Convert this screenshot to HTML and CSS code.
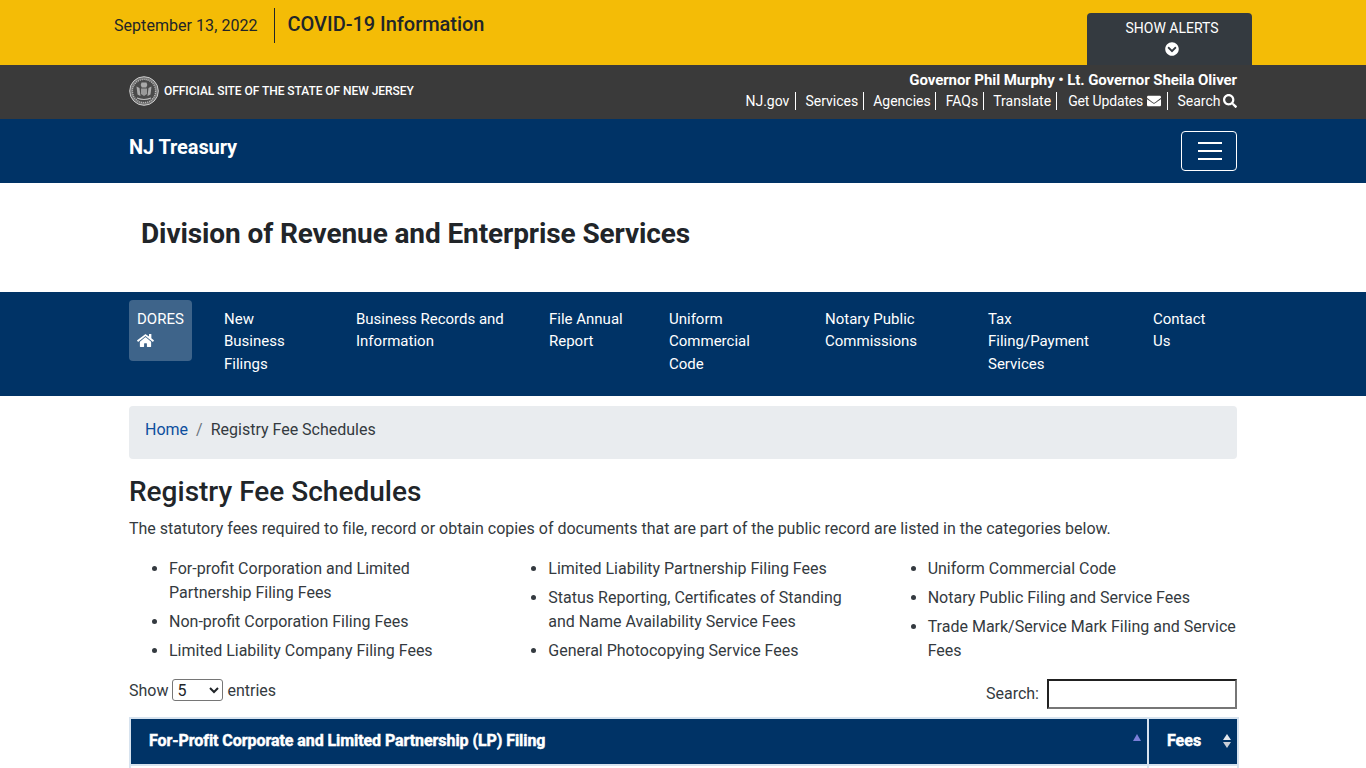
FILE: index.html
```html
<!DOCTYPE html>
<html lang="en">
<head>
<meta charset="utf-8">
<title>Registry Fee Schedules</title>
<link rel="stylesheet" href="styles.css">
</head>
<body>
<div class="alertbar">
  <div class="alertbar-in">
    <span class="date">September 13, 2022</span>
    <span class="covid">COVID-19 Information</span>
    <button class="alerts"><span>SHOW ALERTS</span>
      <svg class="chev" viewBox="0 0 512 512" width="14" height="14"><path fill="#fff" d="M504 256c0 137-111 248-248 248S8 393 8 256 119 8 256 8s248 111 248 248zM273 369l136-136c9-9 9-25 0-34l-17-17c-9-9-25-9-34 0L256 284 154 182c-9-9-25-9-34 0l-17 17c-9 9-9 25 0 34l136 136c9 10 25 10 34 0z"/></svg>
    </button>
  </div>
</div>
<div class="statebar">
  <div class="wrap statebar-in">
    <div class="official">
      <svg class="seal" viewBox="0 0 30 30" width="30" height="30">
        <circle cx="15" cy="15" r="14.3" fill="#777" stroke="#ccc" stroke-width="1"/>
        <circle cx="15" cy="15" r="11.6" fill="#4a4a4a" stroke="#bbb" stroke-width="1.4" stroke-dasharray="1 1"/>
        <path fill="#aaa" d="M12.5 6.5h5l.8 2.5-1 2.5h-4.6l-1-2.5zM7.5 10.5l3 1.5 1 8-3-1.5zM22.5 10.5l-3 1.5-1 8 3-1.5z"/>
        <path fill="#999" d="M12 12.5h6v5.5l-3 2-3-2z"/>
        <path stroke="#bbb" stroke-width="1.2" fill="none" d="M8 22q7 3 14 0"/>
      </svg>
      <span>OFFICIAL SITE OF THE STATE OF NEW JERSEY</span>
    </div>
    <div class="gov">
      <div class="gov-name">Governor Phil Murphy • Lt. Governor Sheila Oliver</div>
      <ul class="gov-links">
        <li>NJ.gov</li>
        <li>Services</li>
        <li>Agencies</li>
        <li>FAQs</li>
        <li>Translate</li>
        <li>Get Updates <svg viewBox="0 0 512 512" width="14" height="14"><path fill="#fff" d="M502 191c4-3 10 0 10 5v205c0 26-22 48-48 48H48c-26 0-48-22-48-48V196c0-5 6-8 10-5 22 17 52 39 154 113 21 15 57 48 92 48 35 0 72-33 92-48 102-74 132-96 154-113zM256 320c23 0 57-29 73-41 133-97 143-105 174-129 6-5 9-12 9-19v-19c0-26-22-48-48-48H48C22 64 0 86 0 112v19c0 7 3 14 9 19 31 24 41 32 174 129 16 12 50 41 73 41z"/></svg></li>
        <li>Search <svg class="tight" viewBox="0 0 512 512" width="14" height="14"><path fill="#fff" d="M505 443L405 343c-4-4-10-7-17-7h-16c28-35 44-80 44-128C416 93 323 0 208 0S0 93 0 208s93 208 208 208c48 0 93-16 128-44v16c0 7 3 13 7 17l100 100c9 9 24 9 34 0l28-28c9-10 9-25 0-34zM208 336c-71 0-128-57-128-128S137 80 208 80s128 57 128 128-57 128-128 128z"/></svg></li>
      </ul>
    </div>
  </div>
</div>
<div class="brandbar">
  <div class="wrap brandbar-in">
    <span class="brand">NJ Treasury</span>
    <button class="toggler"><span></span><span></span><span></span></button>
  </div>
</div>
<div class="division">
  <div class="wrap"><h2>Division of Revenue and Enterprise Services</h2></div>
</div>
<nav class="mainnav">
  <div class="wrap navgrid">
    <div class="navitem active">DORES<svg viewBox="0 0 576 512" width="17" height="15"><path fill="#fff" d="M280 148L96 300v164c0 9 7 16 16 16l112 0c9 0 16-7 16-16v-96c0-9 7-16 16-16h64c9 0 16 7 16 16v96c0 9 7 16 16 16l112 0c9 0 16-7 16-16V300L296 148c-5-4-11-4-16 0zM572 251l-84-69V44c0-7-5-12-12-12h-56c-7 0-12 5-12 12v72L318 58c-18-15-43-15-61 0L4 251c-5 4-6 12-2 17l26 31c4 5 12 6 17 2l235-193c4-4 11-4 15 0l235 193c5 4 13 3 17-2l26-31c4-5 3-13-1-17z"/></svg></div>
    <div class="navitem">New<br>Business<br>Filings</div>
    <div class="navitem">Business Records and Information</div>
    <div class="navitem">File Annual Report</div>
    <div class="navitem">Uniform<br>Commercial<br>Code</div>
    <div class="navitem">Notary Public Commissions</div>
    <div class="navitem">Tax<br>Filing/Payment<br>Services</div>
    <div class="navitem">Contact<br>Us</div>
  </div>
</nav>
<main class="wrap content">
  <div class="crumb"><a href="#">Home</a><span class="sep">/</span>Registry Fee Schedules</div>
  <h1>Registry Fee Schedules</h1>
  <p class="intro">The statutory fees required to file, record or obtain copies of documents that are part of the public record are listed in the categories below.</p>
  <div class="cols">
    <ul>
      <li>For-profit Corporation and Limited Partnership Filing Fees</li>
      <li>Non-profit Corporation Filing Fees</li>
      <li>Limited Liability Company Filing Fees</li>
    </ul>
    <ul>
      <li>Limited Liability Partnership Filing Fees</li>
      <li>Status Reporting, Certificates of Standing and Name Availability Service Fees</li>
      <li>General Photocopying Service Fees</li>
    </ul>
    <ul>
      <li>Uniform Commercial Code</li>
      <li>Notary Public Filing and Service Fees</li>
      <li>Trade Mark/Service Mark Filing and Service Fees</li>
    </ul>
  </div>
  <div class="controls">
    <label class="show">Show <select><option>5</option><option>10</option></select> entries</label>
    <label class="search"><span>Search:</span><input type="text"></label>
  </div>
  <table class="fees">
    <thead>
      <tr>
        <th class="c1"><span class="c1-text">For-Profit Corporate and Limited Partnership (LP) Filing</span><span class="sort up"></span></th>
        <th class="c2"><span>Fees</span><span class="sort both"></span></th>
      </tr>
    </thead>
    <tbody>
      <tr><td class="c1"></td><td class="c2"></td></tr>
    </tbody>
  </table>
</main>
</body>
</html>
```
FILE: styles.css
```css
* { box-sizing: border-box; }
html, body { margin: 0; padding: 0; height: 768px; overflow: hidden; }
body { font-family: Roboto, sans-serif; font-size: 16px; line-height: 1.5; color: #212529; background: #fff; }
.wrap { width: 1108px; margin: 0 auto; }

.alertbar { background: #f4bc06; height: 65px; }
.alertbar-in { width: 1138px; margin: 0 auto; display: flex; align-items: flex-start; }
.date { margin-top: 14px; padding-right: 16px; line-height: 24px; letter-spacing: 0.05px; }
.covid { margin-top: 8px; padding-left: 13px; border-left: 1px solid #212529; font-size: 20px; font-weight: 500; line-height: 32px; height: 35px; letter-spacing: -0.03px; }
.alerts { margin-left: auto; margin-top: 13px; width: 165px; height: 52px; background: #343a40; color: #fff; border: 0; border-radius: 4px 4px 0 0; font: 400 14px/20px Roboto, sans-serif; padding: 5px 0 0 5px; display: flex; flex-direction: column; align-items: center; justify-content: flex-start; }
.chev { display: block; margin-top: 4px; }

.statebar { background: #3a3a3a; height: 54px; color: #fff; }
.statebar-in { display: flex; justify-content: space-between; }
.official { display: flex; align-items: center; gap: 5px; font-size: 12px; font-weight: 500; height: 52px; letter-spacing: -0.05px; }
.gov { text-align: right; padding-top: 4px; }
.gov-name { font-size: 15px; font-weight: 700; line-height: 22px; letter-spacing: -0.08px; }
.gov-links { list-style: none; margin: 1px 0 0; padding: 0; display: flex; justify-content: flex-end; font-size: 14px; line-height: 18px; }
.gov-links li { padding: 0 4.5px 0 9.5px; border-right: 1px solid #fff; }
.gov-links li:first-child { padding-left: 0; padding-right: 5.5px; }
.gov-links li:nth-child(6) { padding-left: 11.5px; padding-right: 6.5px; letter-spacing: -0.15px; }
.gov-links li:last-child { padding-right: 0; border-right: 0; }
.gov-links svg { vertical-align: -2px; }
.gov-links svg.tight { margin-left: -1px; }

.brandbar { background: #003366; height: 64px; }
.brandbar-in { display: flex; justify-content: space-between; align-items: flex-start; }
.brand { color: #fff; font-size: 20px; font-weight: 700; line-height: 30px; margin-top: 13px; letter-spacing: -0.1px; }
.toggler { width: 56px; height: 40px; margin-top: 12px; background: transparent; border: 1px solid #fff; border-radius: 4px; padding: 10px 16px 0 16px; display: flex; flex-direction: column; gap: 6px; }
.toggler span { display: block; width: 24px; height: 2px; background: #fff; }

.division { height: 109px; background: #fff; }
.division h2 { margin: 0; padding: 31px 0 0 12px; font-size: 28px; font-weight: 700; line-height: 40px; letter-spacing: -0.11px; }

.mainnav { background: #003366; height: 104px; padding-top: 8px; color: #fff; }
.navgrid { display: grid; grid-template-columns: 63px 156px 193px 120px 156px 163px 165px 92px; font-size: 15px; line-height: 22.5px; }
.navitem { padding: 7.5px 8px 8px; }
.navitem:nth-child(2) { margin-left: 24px; }
.navitem.active { background: #3e648a; border-radius: 4px; height: 61px; }
.navitem.active svg { display: block; margin-top: 3px; }

.content { padding-top: 10px; }
.crumb { background: #e9ecef; border-radius: 4px; height: 53px; padding: 12px 16px 0; color: #343a40; }
.crumb a { color: #0d4f9e; text-decoration: none; }
.crumb .sep { color: #6c757d; padding: 0 8px; }
h1 { margin: 16px 0 0; font-size: 28px; font-weight: 500; line-height: 34px; }
.intro { margin: 8px 0 0; letter-spacing: -0.007px; color: #343a40; }
.cols { display: grid; grid-template-columns: repeat(3, 1fr); column-gap: 30px; margin-top: 16px; color: #343a40; }
.cols ul { margin: 0; padding-left: 40px; }
.cols li { margin-bottom: 5px; }
.controls { display: flex; justify-content: space-between; align-items: flex-start; margin-top: 11px; color: #343a40; }
.show select { font: 16px Roboto, sans-serif; width: 51px; height: 22px; padding: 0; background: #fff; border: 1px solid #767676; border-radius: 3px; color: #212529; }
.search { display: flex; align-items: flex-start; gap: 8px; }
.search span { margin-top: 3px; }
.search input { width: 190px; height: 30px; border: 2px solid; border-color: #212121 #767676 #767676 #212121; padding: 1px 2px; background: #fff; }
.fees { width: 1110px; margin-top: 8px; border-collapse: separate; border-spacing: 0; border: 2px solid #d7e3ef; border-bottom: 0; }
.fees th { background: #003366; color: #fff; height: 45px; text-align: left; position: relative; font-size: 16px; font-weight: 700; padding: 0 18px 2px; -webkit-text-stroke: 0.45px #fff; }
.fees td { border-top: 2px solid #d7e3ef; height: 4px; padding: 0; }
.c1-text { letter-spacing: -0.07px; }
.fees .c2 { width: 90px; border-left: 2px solid #d7e3ef; }
.sort { position: absolute; right: 6px; top: 15px; width: 0; height: 0; border: 4.5px solid transparent; border-top: 0; border-bottom: 7px solid #7b7fd8; }
.sort.both { right: 6px; top: 15px; border-bottom: 6.5px solid #e4e8ee; }
.sort.both::after { content: ""; position: absolute; left: -4.5px; top: 7.5px; width: 0; height: 0; border: 4.5px solid transparent; border-bottom: 0; border-top: 6.5px solid #c9ced6; }
```
